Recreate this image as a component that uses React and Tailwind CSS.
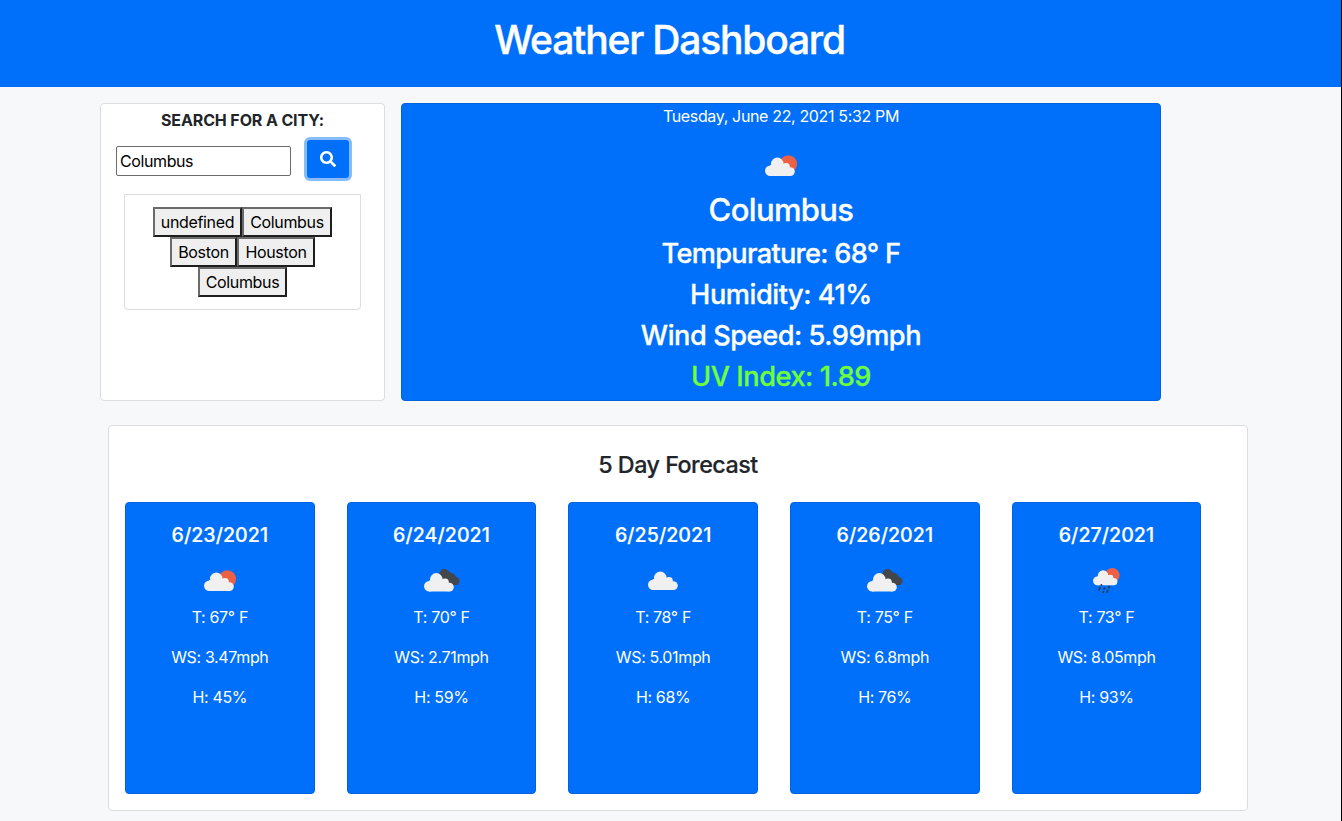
import React from "react";

function Cloud() {
  return (
    <g fill="#f0f0f0">
      <circle cx="5.3" cy="15.7" r="5.3" />
      <circle cx="12.3" cy="8.9" r="6.3" />
      <circle cx="21" cy="12" r="3.9" />
      <circle cx="25.4" cy="16.6" r="4.4" />
      <path d="M5 10 H21 L25.500 14 V21 H5 Z" />
    </g>
  );
}

function WeatherIcon({ kind }) {
  if (kind === "sun") {
    return (
      <svg className="h-[22px] w-[33px]" viewBox="0 0 33 22">
        <circle cx="23.3" cy="9" r="8.8" fill="#ec6044" />
        <Cloud />
      </svg>
    );
  }
  if (kind === "broken") {
    return (
      <svg className="h-[23px] w-[36px]" viewBox="0 0 36 23">
        <g fill="#43474b">
          <circle cx="20.3" cy="5" r="4.9" />
          <circle cx="27.600" cy="7.600" r="3.300" />
          <circle cx="31.500" cy="12.200" r="3.900" />
          <path d="M17 8 L22 0.600 L29 5 L33 8.600 L32 16 L24 16 Z" />
        </g>
        <g transform="translate(0 1.5)">
          <Cloud />
        </g>
      </svg>
    );
  }
  if (kind === "cloud") {
    return (
      <svg className="h-[20px] w-[31px]" viewBox="0 2 31 20">
        <Cloud />
      </svg>
    );
  }
  return (
    <svg className="h-[26px] w-[27px]" viewBox="0 0 27 26">
      <circle cx="19.3" cy="7.4" r="7.3" fill="#ec6044" />
      <g transform="scale(0.82)">
        <Cloud />
      </g>
      <g stroke="#2d3b4b" strokeWidth="1.7" strokeLinecap="round">
        <path d="M8.400 16.800v0.400M7 19.600l-.7 1.400M11.600 20l-.5 .9M16.200 18.600l-.5 1.200M6.100 22v.1M10.500 23.800l-.4 .5M14.800 22.600l-.8 1.600" />
      </g>
    </svg>
  );
}

const days = [
  { date: "6/23/2021", kind: "sun", t: "T: 67° F", ws: "WS: 3.47mph", h: "H: 45%" },
  { date: "6/24/2021", kind: "broken", t: "T: 70° F", ws: "WS: 2.71mph", h: "H: 59%" },
  { date: "6/25/2021", kind: "cloud", t: "T: 78° F", ws: "WS: 5.01mph", h: "H: 68%" },
  { date: "6/26/2021", kind: "broken", t: "T: 75° F", ws: "WS: 6.8mph", h: "H: 76%" },
  { date: "6/27/2021", kind: "rain", t: "T: 73° F", ws: "WS: 8.05mph", h: "H: 93%" },
];

function CityButton({ children, className }) {
  return (
    <button
      className={
        "h-[30px] border-2 border-t-[#6b6b6b] border-l-[#6b6b6b] border-r-[#1e1e1e] border-b-[#1e1e1e] bg-[#efefef] text-center leading-[26px] whitespace-nowrap text-black " +
        className
      }
    >
      {children}
    </button>
  );
}

export default function App() {
  return (
    <div className="h-[821px] overflow-hidden border-r border-black bg-[#f7f8fa] font-['Inter','Liberation_Sans',sans-serif] text-[16px] leading-6 tracking-[-0.35px] text-[#212529]">
      <header className="flex h-[87px] justify-center bg-[#0070fb] pt-4 pr-0.5">
        <h1 className="text-[39px] leading-[48px] font-medium tracking-[-1.2px] text-white [-webkit-text-stroke:0.4px_white]">
          Weather Dashboard
        </h1>
      </header>

      <div className="mt-4 ml-[100px] flex gap-4">
        <section className="flex h-[298px] w-[285px] flex-col rounded border border-[#dcddde] bg-white">
          <h2 className="mt-1 text-center font-bold tracking-[-0.12px]">SEARCH FOR A CITY:</h2>
          <div className="mt-2 ml-[15px] flex">
            <input
              className="mt-[6px] h-[30px] w-[175px] rounded-[2px] border border-[#6b6b6b] bg-white px-[3px] tracking-[-0.4px] text-black outline-none"
              defaultValue="Columbus"
            />
            <button className="ml-4 flex h-[38px] w-[42px] items-center justify-center rounded-[3px] bg-[#0070fb] ring-3 ring-[#87bcfb]">
              <svg className="h-4 w-4" viewBox="0 0 512 512" fill="white">
                <path d="M505 442.7L405.3 343c-4.500-4.500-10.600-7-17-7H372c27.600-35.300 44-79.700 44-128C416 93.100 322.900 0 208 0S0 93.100 0 208s93.100 208 208 208c48.300 0 92.700-16.400 128-44v16.300c0 6.400 2.500 12.500 7 17l99.700 99.700c9.400 9.400 24.600 9.400 33.900 0l28.300-28.300c9.400-9.400 9.400-24.600.1-34zM208 336c-70.700 0-128-57.200-128-128 0-70.700 57.200-128 128-128 70.700 0 128 57.200 128 128 0 70.700-57.200 128-128 128z" />
              </svg>
            </button>
          </div>
          <div className="mt-4 ml-[23px] flex h-[116px] w-[237px] flex-col items-center rounded-b border border-[#dcddde] pt-3">
            <div className="flex">
              <CityButton className="w-[89px]">undefined</CityButton>
              <CityButton className="w-[90px]">Columbus</CityButton>
            </div>
            <div className="flex">
              <CityButton className="w-[67px]">Boston</CityButton>
              <CityButton className="w-[78px]">Houston</CityButton>
            </div>
            <CityButton className="w-[89px]">Columbus</CityButton>
          </div>
        </section>

        <section className="flex h-[298px] w-[760px] flex-col items-center rounded border border-[#0062dc] bg-[#0070fb] font-medium text-white">
          <p className="font-normal">Tuesday, June 22, 2021 5:32 PM</p>
          <div className="mt-[23px] h-[42px] pt-1">
            <WeatherIcon kind="sun" />
          </div>
          <h2 className="-mt-0.5 text-[31px] leading-[38px] tracking-[-0.65px] [-webkit-text-stroke:0.3px_white]">Columbus</h2>
          <div className="mt-2 flex flex-col items-center gap-2 text-[27.2px] leading-[33px] tracking-[-0.45px]">
            <p className="tracking-[-0.7px] [-webkit-text-stroke:0.3px_white]">Tempurature: 68° F</p>
            <p className="[-webkit-text-stroke:0.3px_white]">Humidity: 41%</p>
            <p className="[-webkit-text-stroke:0.3px_white]">Wind Speed: 5.99mph</p>
            <p className="text-[#70ff38] [-webkit-text-stroke:0.3px_#70ff38]">UV Index: 1.89</p>
          </div>
        </section>
      </div>

      <section className="mt-6 ml-[108px] h-[386px] w-[1140px] rounded border border-[#dcddde] bg-white pl-4">
        <h2 className="mt-6 pr-4 text-center text-[23.3px] leading-[29px] font-medium tracking-[-0.5px] [-webkit-text-stroke:0.2px_#212529]">
          5 Day Forecast
        </h2>
        <div className="mt-[23px] flex gap-8">
          {days.map((d) => (
            <article
              key={d.date}
              className="flex h-[292px] w-[189.67px] flex-col items-center rounded border border-[#0062dc] bg-[#0070fb] text-white"
            >
              <h3 className="mt-5 text-[19.6px] leading-6 font-medium tracking-[0.05px] [-webkit-text-stroke:0.2px_white]">
                {d.date}
              </h3>
              <div className="flex h-[58px] items-center justify-center">
                <div className="pt-[9px] pl-px">
                  <WeatherIcon kind={d.kind} />
                </div>
              </div>
              <p>{d.t}</p>
              <p className="mt-4">{d.ws}</p>
              <p className="mt-4">{d.h}</p>
            </article>
          ))}
        </div>
      </section>
    </div>
  );
}
